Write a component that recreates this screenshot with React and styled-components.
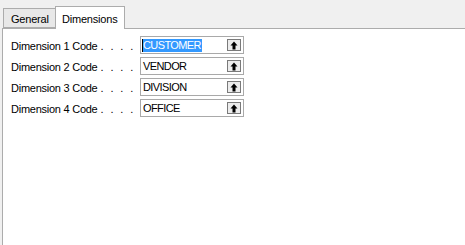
import React from "react";
import styled, { createGlobalStyle } from "styled-components";

const Global = createGlobalStyle`
  html, body { margin: 0; padding: 0; background: #f0f0f0; }
  body { font-family: Tahoma, "Liberation Sans", "DejaVu Sans", sans-serif; font-size: 11px; color: #000; }
  #root { width: 465px; height: 245px; overflow: hidden; }
`;

const Frame = styled.div`
  width: 465px;
  height: 245px;
  display: flex;
  flex-direction: column;
  padding-left: 2px;
  box-sizing: border-box;
`;

const TabStrip = styled.div`
  display: flex;
  align-items: flex-end;
  height: 28px;
  padding-left: 1px;
  position: relative;
`;

const Tab = styled.div`
  box-sizing: border-box;
  height: ${(p) => (p.$active ? "23px" : "20px")};
  width: ${(p) => (p.$active ? "70px" : "53px")};
  padding-left: ${(p) => (p.$active ? "6px" : "7px")};
  padding-top: 2px;
  margin-bottom: ${(p) => (p.$active ? "-1px" : "0")};
  margin-left: ${(p) => (p.$active ? "-1px" : "0")};
  background: ${(p) => (p.$active ? "#ffffff" : "#e8e8e8")};
  border: 1px solid #acacac;
  border-bottom: ${(p) => (p.$active ? "none" : "1px solid #acacac")};
  display: flex;
  align-items: center;
  line-height: 14px;
  letter-spacing: -0.2px;
  position: relative;
  z-index: ${(p) => (p.$active ? 2 : 1)};
`;

const Panel = styled.div`
  flex: 1;
  background: #ffffff;
  border-top: 1px solid #acacac;
  border-left: 1px solid #acacac;
  padding: 7px 0 0 8px;
  display: flex;
  flex-direction: column;
  gap: 3px;
`;

const Row = styled.div`
  display: flex;
  align-items: center;
  height: 18px;
`;

const Label = styled.div`
  width: 129px;
  padding-top: 1px;
  display: flex;
  white-space: pre;
`;

const LabelText = styled.span`
  letter-spacing: -0.25px;
`;

const Dots = styled.span`
  margin-left: 3px;
  letter-spacing: 1.9px;
`;

const Field = styled.div`
  box-sizing: border-box;
  width: 104px;
  height: 18px;
  border: 1px solid #a9a9a9;
  display: flex;
  align-items: center;
  padding-left: 1px;
  padding-right: 2px;
  justify-content: space-between;
`;

const Value = styled.span`
  line-height: 13px;
  padding: 0 1px 0 0;
  letter-spacing: -0.6px;
  background: ${(p) => (p.$selected ? "#3399ff" : "transparent")};
  color: ${(p) => (p.$selected ? "#ffffff" : "#000000")};
  border-left: ${(p) => (p.$selected ? "1px solid #000" : "1px solid transparent")};
`;

const LookupButton = styled.div`
  box-sizing: border-box;
  width: 14px;
  height: 12px;
  border: 1px solid #7a7a7a;
  background: #ececec;
  display: flex;
  align-items: center;
  justify-content: center;
`;

const Arrow = () => (
  <svg width="8" height="9" viewBox="0 0 8 9">
    <path d="M4 0.5 L7.5 4.5 L5.5 4.5 L5.5 8.5 L2.5 8.5 L2.5 4.5 L0.5 4.5 Z" fill="#000" />
  </svg>
);

const rows = [
  { n: 1, v: "CUSTOMER", sel: true },
  { n: 2, v: "VENDOR" },
  { n: 3, v: "DIVISION" },
  { n: 4, v: "OFFICE" },
];

export default function App() {
  return (
    <>
      <Global />
      <Frame>
        <TabStrip>
          <Tab>General</Tab>
          <Tab $active>Dimensions</Tab>
        </TabStrip>
        <Panel>
          {rows.map((r) => (
            <Row key={r.n}>
              <Label>
                <LabelText>{`Dimension ${r.n} Code`}</LabelText>
                <Dots>. . . .</Dots>
              </Label>
              <Field>
                <Value $selected={r.sel}>{r.v}</Value>
                <LookupButton>
                  <Arrow />
                </LookupButton>
              </Field>
            </Row>
          ))}
        </Panel>
      </Frame>
    </>
  );
}
